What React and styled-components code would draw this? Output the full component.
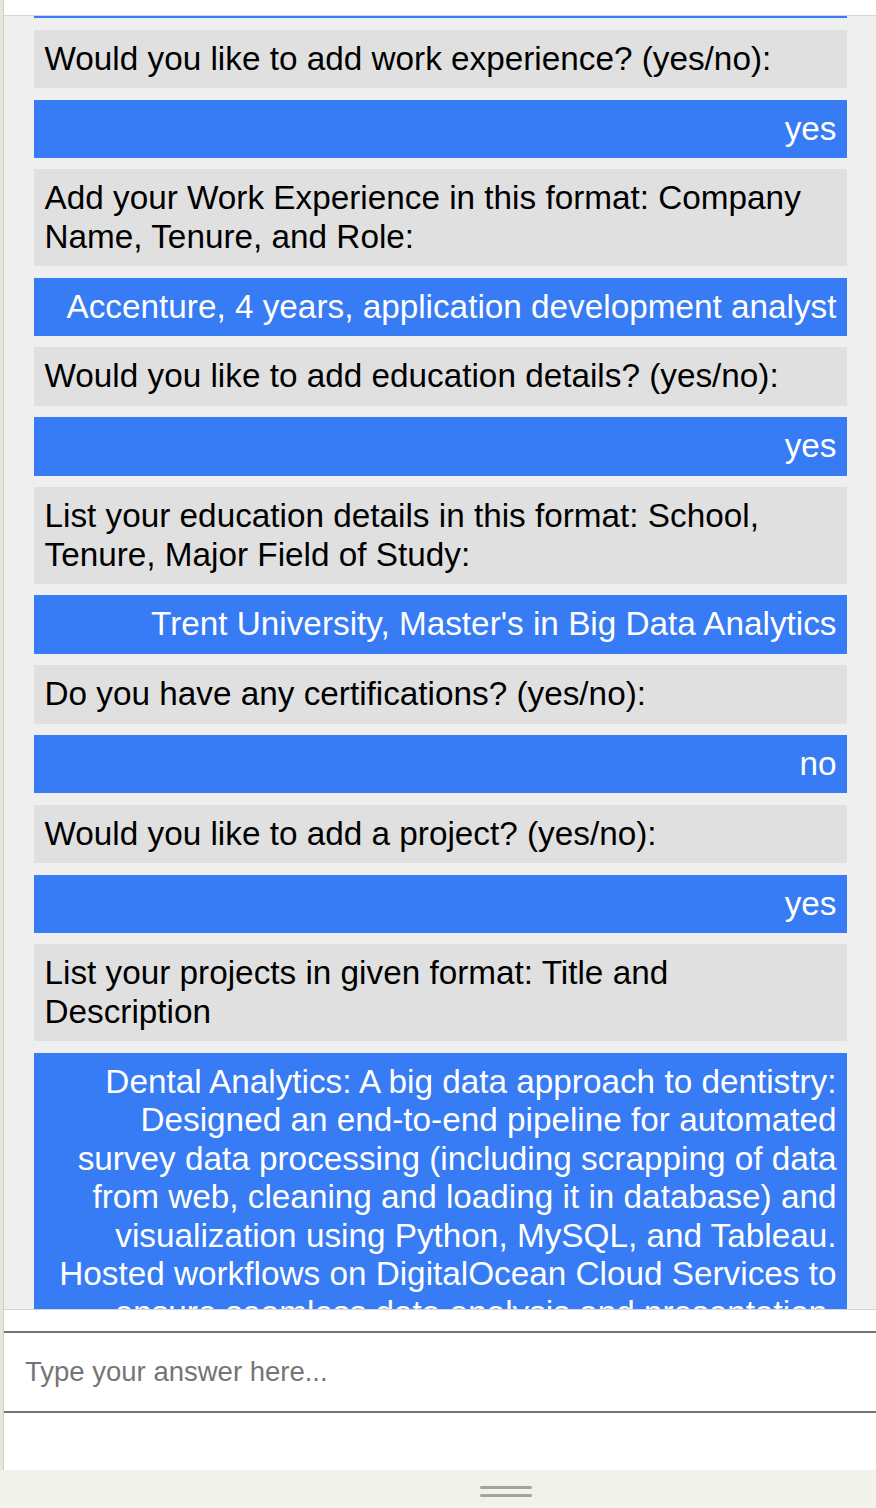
import { useLayoutEffect, useRef } from "react";
import styled, { createGlobalStyle } from "styled-components";

const GlobalStyle = createGlobalStyle`
  html, body {
    margin: 0;
    padding: 0;
    background: #f1f3eb;
  }
  body {
    font-family: "Liberation Sans", Arial, Helvetica, sans-serif;
  }
`;

const Page = styled.div`
  display: flex;
  flex-direction: column;
  height: 1508px;
  padding-left: 3px;
  background: #e4e9de;
`;

const Panel = styled.div`
  display: flex;
  flex-direction: column;
  height: 1470px;
  padding-top: 15px;
  box-sizing: border-box;
  background: #ffffff;
  border-left: 1px solid #cbcfc6;
`;

const ChatBox = styled.div`
  height: 1293px;
  overflow: hidden;
  background: #efefef;
  border-top: 1px solid #d4d4d4;
  border-bottom: 1px solid #d4d4d4;
  padding: 0 29px 0 30px;
`;

const Bubble = styled.div`
  margin: 0 0 11.3px;
  padding: 10px 10.5px;
  font-size: 33.3px;
  line-height: 38.5px;
  background: ${(p) => (p.$user ? "#377bf5" : "#e0e0e0")};
  color: ${(p) => (p.$user ? "#ffffff" : "#000000")};
  text-align: ${(p) => (p.$user ? "right" : "left")};
`;

const InputRow = styled.div`
  padding-top: 21px;
`;

const AnswerInput = styled.input`
  display: block;
  width: 100%;
  height: 82px;
  box-sizing: border-box;
  border: none;
  border-top: 2px solid #767676;
  border-bottom: 2px solid #767676;
  padding: 0 21px;
  font-family: "Liberation Sans", Arial, sans-serif;
  font-size: 27.5px;
  color: #000;
  background: #fff;
  outline: none;
  &::placeholder {
    color: #757575;
  }
`;

const BottomBar = styled.div`
  height: 38px;
  background: #f1f3eb;
  margin-left: -3px;
  display: flex;
  flex-direction: column;
  gap: 5px;
  padding: 16px 0 0 480px;
  box-sizing: border-box;
`;

const HandleLine = styled.div`
  width: 52px;
  height: 3px;
  border-radius: 2px;
  background: #a3a3a3;
`;

const messages = [
  { from: "bot", text: "Hi! Let's build your resume. What is your full name?" },
  { from: "user", text: "Alex Johnson" },
  { from: "bot", text: "Please enter your email address:" },
  { from: "user", text: "alex.johnson@example.com" },
  { from: "bot", text: "Please enter your phone number:" },
  { from: "user", text: "+1 705 555 0199" },
  { from: "bot", text: "Would you like to add work experience? (yes/no):", anchor: true },
  { from: "user", text: "yes" },
  { from: "bot", text: "Add your Work Experience in this format: Company Name, Tenure, and Role:" },
  { from: "user", text: "Accenture, 4 years, application development analyst" },
  { from: "bot", text: "Would you like to add education details? (yes/no):" },
  { from: "user", text: "yes" },
  { from: "bot", text: "List your education details in this format: School, Tenure, Major Field of Study:" },
  { from: "user", text: "Trent University, Master's in Big Data Analytics" },
  { from: "bot", text: "Do you have any certifications? (yes/no):" },
  { from: "user", text: "no" },
  { from: "bot", text: "Would you like to add a project? (yes/no):" },
  { from: "user", text: "yes" },
  { from: "bot", text: "List your projects in given format: Title and Description" },
  {
    from: "user",
    text:
      "Dental Analytics: A big data approach to dentistry: Designed an end-to-end pipeline for automated survey data processing (including scrapping of data from web, cleaning and loading it in database) and visualization using Python, MySQL, and Tableau. Hosted workflows on DigitalOcean Cloud Services to ensure seamless data analysis and presentation.",
  },
  { from: "bot", text: "Would you like to add another project? (yes/no):" },
];

export default function App() {
  const boxRef = useRef(null);
  const anchorRef = useRef(null);

  // keep the chat scrolled to where the work experience question sits near the top
  useLayoutEffect(() => {
    const box = boxRef.current;
    const anchor = anchorRef.current;
    if (!box || !anchor) return;
    const offset = anchor.getBoundingClientRect().top - box.getBoundingClientRect().top;
    box.scrollTop = Math.round(box.scrollTop + offset - 15);
  }, []);

  return (
    <>
      <GlobalStyle />
      <Page>
        <Panel>
          <ChatBox ref={boxRef}>
            {messages.map((m, i) => (
              <Bubble key={i} $user={m.from === "user"} ref={m.anchor ? anchorRef : null}>
                {m.text}
              </Bubble>
            ))}
          </ChatBox>
          <InputRow>
            <AnswerInput type="text" placeholder="Type your answer here..." />
          </InputRow>
        </Panel>
        <BottomBar>
          <HandleLine />
          <HandleLine />
        </BottomBar>
      </Page>
    </>
  );
}
